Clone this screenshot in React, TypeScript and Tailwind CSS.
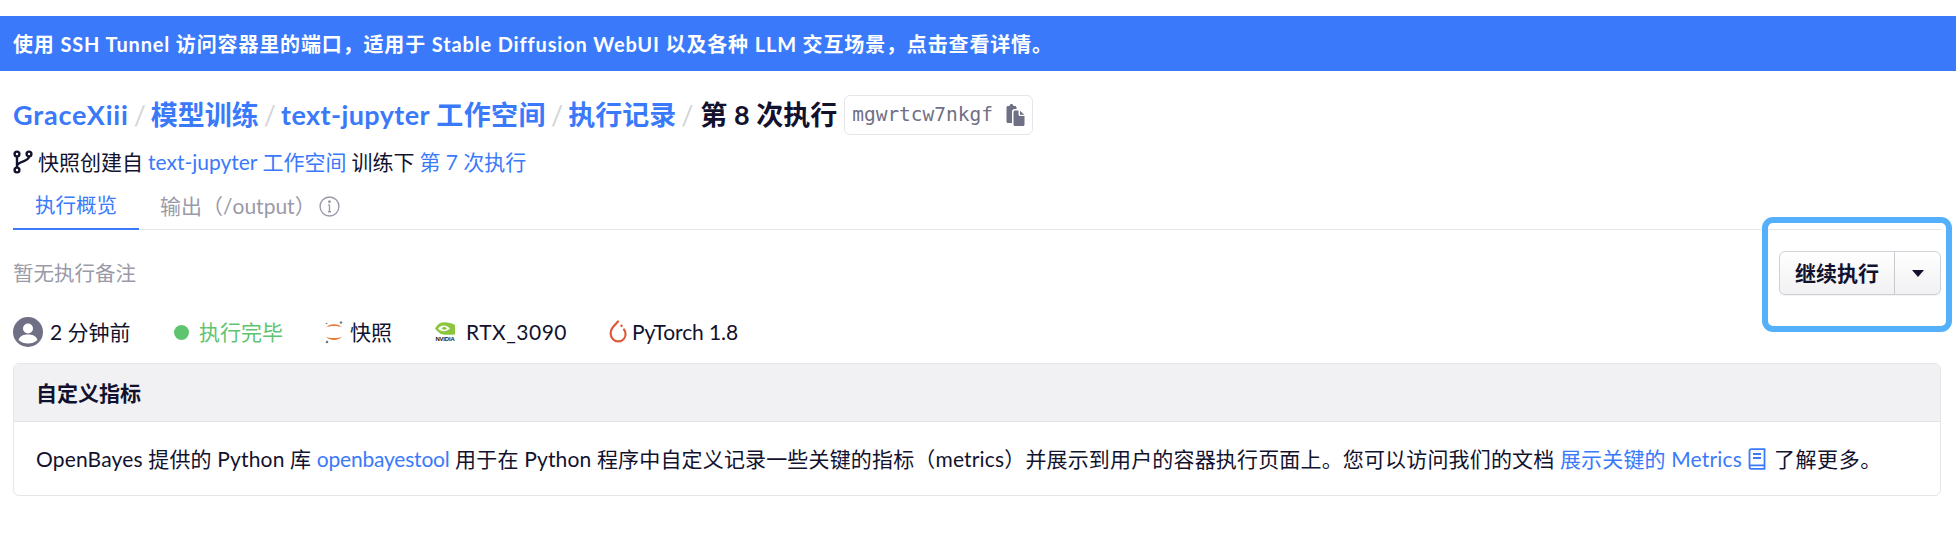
import React from 'react';

const Sep = () => <span className="mx-[5px] font-normal text-[#d4d4d8]">/</span>;

const BranchIcon = () => (
  <svg viewBox="0 0 20 24" className="h-[24px] w-[20px] shrink-0" fill="none" stroke="#12122e" strokeWidth="2.4">
    <circle cx="4" cy="4" r="2.4" />
    <circle cx="4" cy="20" r="2.4" />
    <circle cx="16" cy="4" r="2.4" />
    <path d="M4 6.5V17.5M16 6.5C16 12 4 11 4 16" />
  </svg>
);

const PasteIcon = () => (
  <svg viewBox="0 0 20 24" className="h-[24px] w-[21px]" fill="#6f6f85">
    <path d="M1 4.5C1 3.7 1.7 3 2.5 3H4C4.3 1.6 5.2 1 6 1s1.7.6 2 2h1.5C10.3 3 11 3.7 11 4.5V6H9C7.5 6 6.5 7 6.5 8.5V20H2.500C1.700 20 1 19.300 1 18.500Z" />
    <path d="M9.500 7.500H13V11.500C13 12.300 13.700 13 14.500 13H19V21.500C19 22.300 18.300 23 17.500 23H9.500C8.700 23 8 22.300 8 21.500V9C8 8.200 8.700 7.500 9.500 7.500ZM14.500 7.800 18.800 11.800H14.500Z" />
  </svg>
);

const InfoIcon = () => (
  <svg viewBox="0 0 20 20" className="ml-[3px] h-[21px] w-[21px]" fill="none" stroke="#9a9aa8" strokeWidth="1.3">
    <circle cx="10" cy="10" r="9" />
    <path d="M10 8.500V15M8.500 15H11.500M8.500 8.500H10" />
    <circle cx="10" cy="5.500" r="0.7" fill="#9a9aa8" />
  </svg>
);

const AvatarIcon = () => (
  <svg viewBox="0 0 30 30" className="h-[30px] w-[30px]">
    <circle cx="15" cy="15" r="15" fill="#6f6f85" />
    <circle cx="15" cy="11.500" r="5" fill="#fff" />
    <path d="M5.500 23C7 18.500 11 17.500 15 17.500S23 18.500 24.500 23C22 25.500 18.500 26.500 15 26.500S8 25.500 5.500 23Z" fill="#fff" />
  </svg>
);

const JupyterIcon = () => (
  <svg viewBox="0 0 20 26" className="h-[26px] w-[20px]">
    <path d="M2 8.500C5 4 15 4 18 8.500C15 6.500 5 6.500 2 8.500Z" fill="#e8792f" />
    <path d="M2 17.500C5 22 15 22 18 17.500C15 19.500 5 19.500 2 17.500Z" fill="#e8792f" />
    <circle cx="17" cy="3.500" r="1.200" fill="#77777f" />
    <circle cx="2.500" cy="4.500" r="0.800" fill="#77777f" />
    <circle cx="3" cy="23" r="1.300" fill="#77777f" />
  </svg>
);

const NvidiaIcon = () => (
  <div className="flex w-[22px] flex-col items-center">
    <svg viewBox="0 0 20 14" className="h-[15px] w-[20px]">
      <path d="M5 1.500C10 0 15 1 20 3.500V13C15 13.500 10 13.500 6 12.500C3 10.500 1 8.500 0 7C1 5 3 3 5 1.500Z" fill="#8cc63f" />
      <path d="M3 7C6 3.300 11 2.800 15 7C11 10.500 6 10.500 3 7Z" fill="#fff" />
      <path d="M6.500 7C8.500 5 10.500 5.200 12 7C10.500 8.600 8.500 8.600 6.500 7Z" fill="#8cc63f" />
    </svg>
    <span className="font-['Liberation_Sans',sans-serif] text-[6px] leading-[7px] font-bold tracking-[-0.2px] text-[#222]">NVIDIA</span>
  </div>
);

const TorchIcon = () => (
  <svg viewBox="0 0 20 26" className="h-[26px] w-[20px]" fill="none" stroke="#e0583a" strokeWidth="2.200">
    <path d="M10 2.500 5 8C1.800 11.500 1.800 17 5 20.200C8 23.200 12.500 23.200 15.500 20.200C18 17.500 18.300 13.500 16 10.500" strokeLinecap="round" />
    <circle cx="13.500" cy="6.800" r="1.200" fill="#e0583a" stroke="none" />
  </svg>
);

const BookIcon = () => (
  <svg viewBox="0 0 18 22" className="mr-[8px] ml-[6px] inline-block h-[22px] w-[18px] shrink-0" fill="none" stroke="#3a7afa" strokeWidth="1.800">
    <path d="M1.500 18V3C1.500 2 2.300 1.200 3.300 1.200H16.500V20.800H3.300C2.300 20.800 1.500 20 1.500 19C1.500 18 2.300 17.300 3.300 17.300H16.500" />
    <path d="M5 6H13M5 10H13" />
  </svg>
);

const MetaItem: React.FC<{ icon: React.ReactNode; children: React.ReactNode; className?: string }> = ({ icon, children, className }) => (
  <div className={`flex items-center gap-[7px] ${className ?? ''}`}>
    {icon}
    {children}
  </div>
);

export default function App() {
  return (
    <div className="relative h-[538px] overflow-hidden bg-white pt-4 font-['Lato','Noto_Sans_CJK_SC',sans-serif] text-[21px] text-[#12122e]">
      <div className="flex h-[55px] items-center bg-[#3a7afa] pl-[13px] text-[20px] font-bold tracking-[0.85px] text-white">
        使用 SSH Tunnel 访问容器里的端口，适用于 Stable Diffusion WebUI 以及各种 LLM 交互场景，点击查看详情。
      </div>

      <div className="pr-[15px] pl-[13px]">
        <div className="mt-[23px] flex h-[42px] items-center text-[27px] font-bold text-[#3a7afa]">
          <a className="tracking-[0.8px]">GraceXiii</a>
          <Sep />
          <a>模型训练</a>
          <Sep />
          <a className="tracking-[0.4px]">text-jupyter 工作空间</a>
          <Sep />
          <a>执行记录</a>
          <Sep />
          <span className="ml-[2px] text-[#12122e]">第 8 次执行</span>
          <div className="ml-[7px] flex h-[40px] items-center gap-[12px] rounded-[6px] border border-[#e6e6ea] pr-[6px] pl-[7px] font-['DejaVu_Sans_Mono',monospace] text-[19.500px] font-normal text-[#6f6f85]">
            mgwrtcw7nkgf
            <PasteIcon />
          </div>
        </div>

        <div className="mt-[11px] flex h-[30px] items-center gap-[5px]">
          <BranchIcon />
          <span>快照创建自</span>
          <a className="text-[#3a7afa]">text-jupyter 工作空间</a>
          <span>训练下</span>
          <a className="text-[#3a7afa]">第 7 次执行</a>
        </div>

        <div className="mt-[6px] flex h-[47px] border-b border-[#e6e6ea]">
          <div className="-mb-px flex w-[126px] items-center justify-center border-b-2 border-[#3a7afa] text-[20.500px] text-[#3a7afa]">执行概览</div>
          <div className="ml-[21px] flex items-center text-[#9a9aa8]">
            输出（/output）
            <InfoIcon />
          </div>
        </div>

        <div className="mt-[21px] flex h-[44px] items-center justify-between">
          <span className="text-[20.500px] text-[#9a9aa8]">暂无执行备注</span>
          <div className="flex h-[44px] rounded-[6px] border border-[#d0d0d6] bg-gradient-to-b from-white to-[#f1f1f3] shadow-[0_1px_1px_rgba(0,0,0,0.06)]">
            <button className="w-[115px] border-r border-[#c8c8ce] text-[21px] font-bold text-[#12122e]">继续执行</button>
            <button className="flex w-[45px] items-center justify-center">
              <span className="h-0 w-0 border-x-[6px] border-t-[7px] border-x-transparent border-t-[#12122e]" />
            </button>
          </div>
        </div>

        <div className="mt-[22px] flex h-[30px] items-center">
          <MetaItem icon={<AvatarIcon />} className="w-[160px]">2 分钟前</MetaItem>
          <MetaItem icon={<span className="mx-[1px] h-[15px] w-[15px] rounded-full bg-[#5fc46f]" />} className="w-[151px] !gap-[9px] text-[#5fc46f]">执行完毕</MetaItem>
          <MetaItem icon={<JupyterIcon />} className="w-[110px] !gap-[6px]">快照</MetaItem>
          <MetaItem icon={<NvidiaIcon />} className="w-[174px] !gap-[10px]"><span className="tracking-[0.5px]">RTX_3090</span></MetaItem>
          <MetaItem icon={<TorchIcon />} className="!gap-[4px]"><span className="tracking-[-0.1px]">PyTorch 1.8</span></MetaItem>
        </div>

        <div className="mt-[16px] overflow-hidden rounded-[6px] border border-[#e6e6ea]">
          <div className="flex h-[58px] items-center border-b border-[#e3e3e7] bg-[#f1f1f3] pl-[22px] font-bold">自定义指标</div>
          <div className="flex h-[73px] items-center pl-[22px] tracking-[0.16px] whitespace-pre">
            OpenBayes 提供的 Python 库 <a className="tracking-[-0.2px] text-[#3a7afa]">openbayestool</a> 用于在 Python 程序中自定义记录一些关键的指标（metrics）并展示到用户的容器执行页面上。您可以访问我们的文档 <a className="text-[#3a7afa]">展示关键的 Metrics</a>
            <BookIcon /><span className="tracking-[0.6px]">了解更多。</span>
          </div>
        </div>
      </div>

      <div className="absolute top-[217px] left-[1762px] h-[115px] w-[190px] rounded-[11px] border-[6px] border-[#55b0fb]" />
    </div>
  );
}
